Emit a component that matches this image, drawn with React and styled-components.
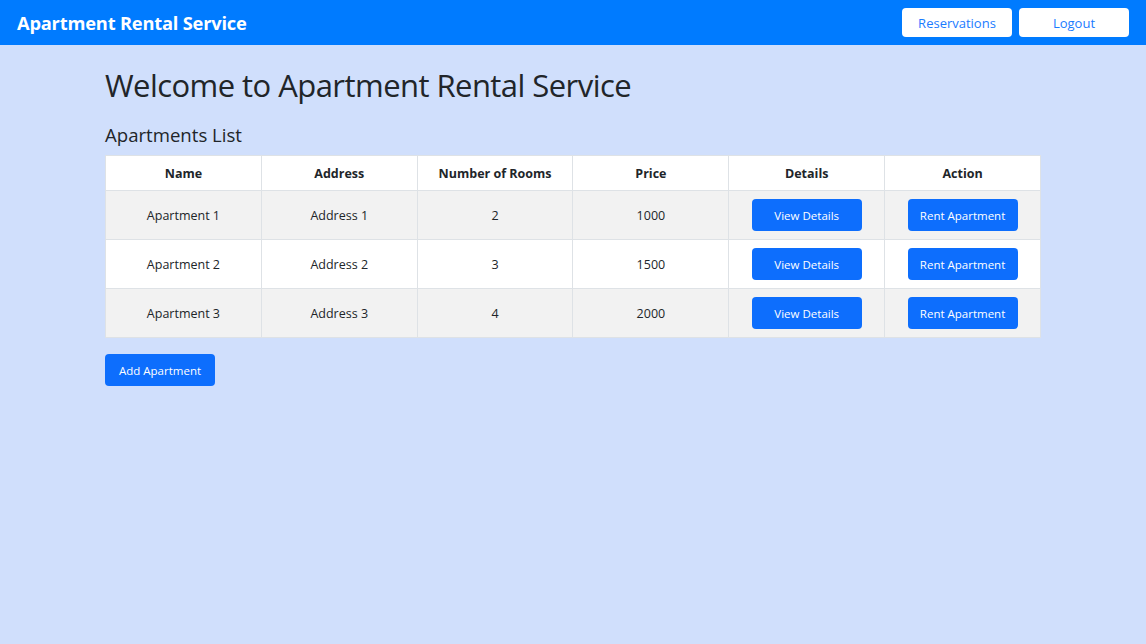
import React from "react";
import styled, { createGlobalStyle } from "styled-components";

const GlobalStyle = createGlobalStyle`
  html, body {
    margin: 0;
    padding: 0;
    background: #d0dffc;
    font-family: "Open Sans", "Noto Sans", "Liberation Sans", sans-serif;
    color: #212529;
  }
  * { box-sizing: border-box; }
`;

const Navbar = styled.nav`
  height: 45px;
  background: #007bff;
  display: flex;
  align-items: center;
  justify-content: space-between;
  padding: 0 17px 0 17px;
`;

const Brand = styled.div`
  color: #fff;
  font-weight: 700;
  font-size: 18.3px;
  letter-spacing: -0.2px;
`;

const NavActions = styled.div`
  display: flex;
  gap: 7px;
`;

const NavButton = styled.button`
  width: 110px;
  height: 29px;
  background: #fff;
  color: #1a7bff;
  border: none;
  border-radius: 4px;
  font-family: inherit;
  font-size: 13px;
  cursor: pointer;
`;

const Container = styled.main`
  width: 960px;
  margin: 0 auto;
  padding: 0 12px;
`;

const Title = styled.h1`
  margin: 20px 0 0;
  font-weight: 400;
  font-size: 31px;
  line-height: 40px;
  letter-spacing: -0.55px;
`;

const Subtitle = styled.h3`
  margin: 18px 0 8px;
  font-weight: 400;
  font-size: 18.6px;
  line-height: 24px;
`;

const Table = styled.table`
  width: 100%;
  border-collapse: collapse;
  table-layout: fixed;
  font-size: 12.5px;
`;

const Th = styled.th`
  height: 35px;
  background: #fff;
  border: 1px solid #dee2e6;
  font-weight: 700;
  text-align: center;
  vertical-align: middle;
`;

const Row = styled.tr`
  background: ${(p) => (p.$striped ? "#f2f2f2" : "#fff")};
`;

const Td = styled.td`
  height: 49px;
  border: 1px solid #dee2e6;
  text-align: center;
  vertical-align: middle;
`;

const PrimaryButton = styled.button`
  width: 110px;
  height: 32px;
  background: #0d6efd;
  color: #fff;
  border: none;
  border-radius: 4px;
  font-family: inherit;
  font-size: 11.5px;
  cursor: pointer;
`;

const Footer = styled.div`
  margin-top: 16px;
`;

const apartments = [
  { name: "Apartment 1", address: "Address 1", rooms: 2, price: 1000 },
  { name: "Apartment 2", address: "Address 2", rooms: 3, price: 1500 },
  { name: "Apartment 3", address: "Address 3", rooms: 4, price: 2000 },
];

const App = () => {
  return (
    <>
      <GlobalStyle />
      <Navbar>
        <Brand>Apartment Rental Service</Brand>
        <NavActions>
          <NavButton>Reservations</NavButton>
          <NavButton>Logout</NavButton>
        </NavActions>
      </Navbar>
      <Container>
        <Title>Welcome to Apartment Rental Service</Title>
        <Subtitle>Apartments List</Subtitle>
        <Table>
          <thead>
            <tr>
              <Th>Name</Th>
              <Th>Address</Th>
              <Th>Number of Rooms</Th>
              <Th>Price</Th>
              <Th>Details</Th>
              <Th>Action</Th>
            </tr>
          </thead>
          <tbody>
            {apartments.map((a, i) => (
              <Row key={a.name} $striped={i % 2 === 0}>
                <Td>{a.name}</Td>
                <Td>{a.address}</Td>
                <Td>{a.rooms}</Td>
                <Td>{a.price}</Td>
                <Td>
                  <PrimaryButton>View Details</PrimaryButton>
                </Td>
                <Td>
                  <PrimaryButton>Rent Apartment</PrimaryButton>
                </Td>
              </Row>
            ))}
          </tbody>
        </Table>
        <Footer>
          <PrimaryButton>Add Apartment</PrimaryButton>
        </Footer>
      </Container>
    </>
  );
};

export default App;
